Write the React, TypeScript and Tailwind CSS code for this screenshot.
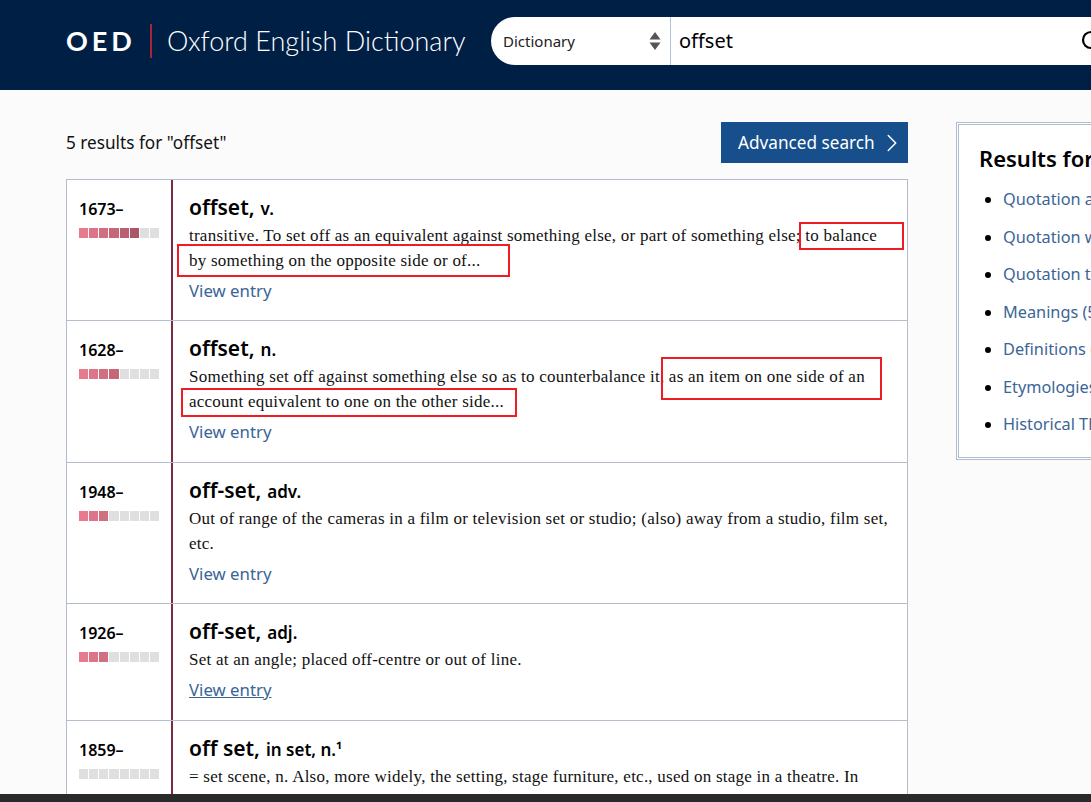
import React from 'react';
import { ChevronRight, Search } from 'lucide-react';

interface Entry {
  year: string;
  word: string;
  pos: React.ReactNode;
  def: string;
  freq: number;
  rowClass: string;
  underline?: boolean;
}

const entries: Entry[] = [
  {
    year: '1673–',
    word: 'offset,',
    pos: 'v.',
    def: 'transitive. To set off as an equivalent against something else, or part of something else; to balance by something on the opposite side or of...',
    freq: 6,
    rowClass: 'h-[141px]',
  },
  {
    year: '1628–',
    word: 'offset,',
    pos: 'n.',
    def: 'Something set off against something else so as to counterbalance it, as an item on one side of an account equivalent to one on the other side...',
    freq: 4,
    rowClass: 'h-[142px]',
  },
  {
    year: '1948–',
    word: 'off-set,',
    pos: 'adv.',
    def: 'Out of range of the cameras in a film or television set or studio; (also) away from a studio, film set, etc.',
    freq: 3,
    rowClass: 'h-[141px]',
  },
  {
    year: '1926–',
    word: 'off-set,',
    pos: 'adj.',
    def: 'Set at an angle; placed off-centre or out of line.',
    freq: 3,
    rowClass: 'h-[117px]',
    underline: true,
  },
  {
    year: '1859–',
    word: 'off set,',
    pos: 'in set, n.¹',
    def: '= set scene, n. Also, more widely, the setting, stage furniture, etc., used on stage in a theatre. In',
    freq: 0,
    rowClass: 'h-[141px]',
  },
];

const sideLinks = [
  'Quotation authors',
  'Quotation works',
  'Quotation text',
  'Meanings (5)',
  'Definitions (5)',
  'Etymologies (5)',
  'Historical Thesaurus',
];

const FreqBar = ({ level }: { level: number }) => {
  const shades = ['bg-[#e67b8d]', 'bg-[#dc7589]', 'bg-[#d06e82]', 'bg-[#c56779]', 'bg-[#ba6071]', 'bg-[#ab5667]'];
  return (
    <div className="mt-[9px] flex h-[10px] w-[80px] gap-px">
      {Array.from({ length: 8 }).map((_, i) => (
        <span key={i} className={`h-full flex-1 ${i < level ? shades[i] : 'bg-[#dfdfdf]'}`} />
      ))}
    </div>
  );
};

const ResultRow = ({ entry }: { entry: Entry }) => (
  <div className={`flex border-b border-[#b5bccb] ${entry.rowClass}`}>
    <div className="w-[104px] shrink-0 pl-[12px] pt-[20px]">
      <div className="text-[16px] font-semibold leading-[19px] text-black">{entry.year}</div>
      <FreqBar level={entry.freq} />
    </div>
    <div className="w-[2px] shrink-0 bg-[#7b2a3f]" />
    <div className="flex-1 pl-[16px] pr-[14px] pt-[13px]">
      <div className="flex items-baseline gap-[6px] leading-[28px] text-black">
        <span className="text-[21px] font-semibold">{entry.word}</span>
        <span className="text-[17px] font-semibold">{entry.pos}</span>
      </div>
      <p className="font-['Liberation_Serif',serif] text-[17px] leading-[25px] tracking-[0.24px] text-[#111]">{entry.def}</p>
      <a className={`mt-[4px] block w-fit text-[16.8px] leading-[27px] text-[#3b6596] ${entry.underline ? 'underline' : ''}`}>
        View entry
      </a>
    </div>
  </div>
);

const App: React.FC = () => {
  return (
    <div className="relative h-[802px] w-[1091px] overflow-hidden bg-[#fbfbfb] font-['Noto_Sans',sans-serif]">
      <header className="flex h-[90px] items-center bg-[#001f45] pb-[8px] pl-[66px]">
        <span className="w-[70px] shrink-0 font-['Lato',sans-serif] text-[27px] font-bold tracking-[4px] text-white">OED</span>
        <span className="ml-[14px] h-[34px] w-[2px] shrink-0 bg-[#a8243a]" />
        <span className="ml-[15px] w-[324px] shrink-0 whitespace-nowrap font-['Lato',sans-serif] text-[27px] font-light text-white">
          Oxford English Dictionary
        </span>
        <div className="flex h-[48px] w-[640px] shrink-0 rounded-l-full bg-white">
          <div className="flex w-[180px] items-center justify-between border-r border-[#b5c3d3] pl-[12px] pr-[9px]">
            <span className="text-[15px] text-[#222]">Dictionary</span>
            <svg width="12" height="20" viewBox="0 0 12 20" className="text-[#555]">
              <path d="M6 1 L11.5 8.5 H0.5 Z M6 19 L0.5 11.5 H11.5 Z" fill="currentColor" />
            </svg>
          </div>
          <div className="flex flex-1 items-center pl-[8px] text-[20px] text-black">
            offset
            <Search className="ml-[347px] size-[24px] shrink-0 text-black" strokeWidth={2.2} />
          </div>
        </div>
      </header>

      <main className="flex pl-[66px] pt-[32px]">
        <div className="w-[842px] shrink-0">
          <div className="flex h-[41px] items-center justify-between">
            <span className="text-[17.2px] text-[#111]">5 results for "offset"</span>
            <button className="flex h-[41px] w-[187px] items-center justify-between bg-[#174e8c] pl-[17px] pr-[1px] text-[17.2px] text-white">
              Advanced search
              <ChevronRight className="size-[30px]" strokeWidth={1.2} />
            </button>
          </div>
          <div className="relative mt-[16px] border-x border-t border-[#b5bccb] bg-white">
            {entries.map((entry) => (
              <ResultRow key={entry.year} entry={entry} />
            ))}
            <span className="absolute left-[732px] top-[42px] h-[28px] w-[105px] border-2 border-[#f01c24]" />
            <span className="absolute left-[110px] top-[64px] h-[33px] w-[333px] border-2 border-[#f01c24]" />
            <span className="absolute left-[594px] top-[177px] h-[43px] w-[221px] border-2 border-[#f01c24]" />
            <span className="absolute left-[114px] top-[208px] h-[29px] w-[336px] border-2 border-[#f01c24]" />
          </div>
        </div>

        <aside className="ml-[48px] h-[338px] w-[300px] shrink-0 border-[3px] border-double border-[#aebccd] bg-white pl-[20px] pt-[18px]">
          <h2 className="whitespace-nowrap text-[22px] font-semibold leading-[30px] text-black">Results for offset</h2>
          <ul className="mt-[13px] list-disc pl-[24px] marker:text-black">
            {sideLinks.map((link) => (
              <li key={link} className="h-[37.5px] whitespace-nowrap text-[16.3px] leading-[26px] text-[#3b6596]">
                {link}
              </li>
            ))}
          </ul>
        </aside>
      </main>

      <div className="absolute bottom-0 left-0 h-[8px] w-full bg-[#2a2a2a]" />
    </div>
  );
};

export default App;
